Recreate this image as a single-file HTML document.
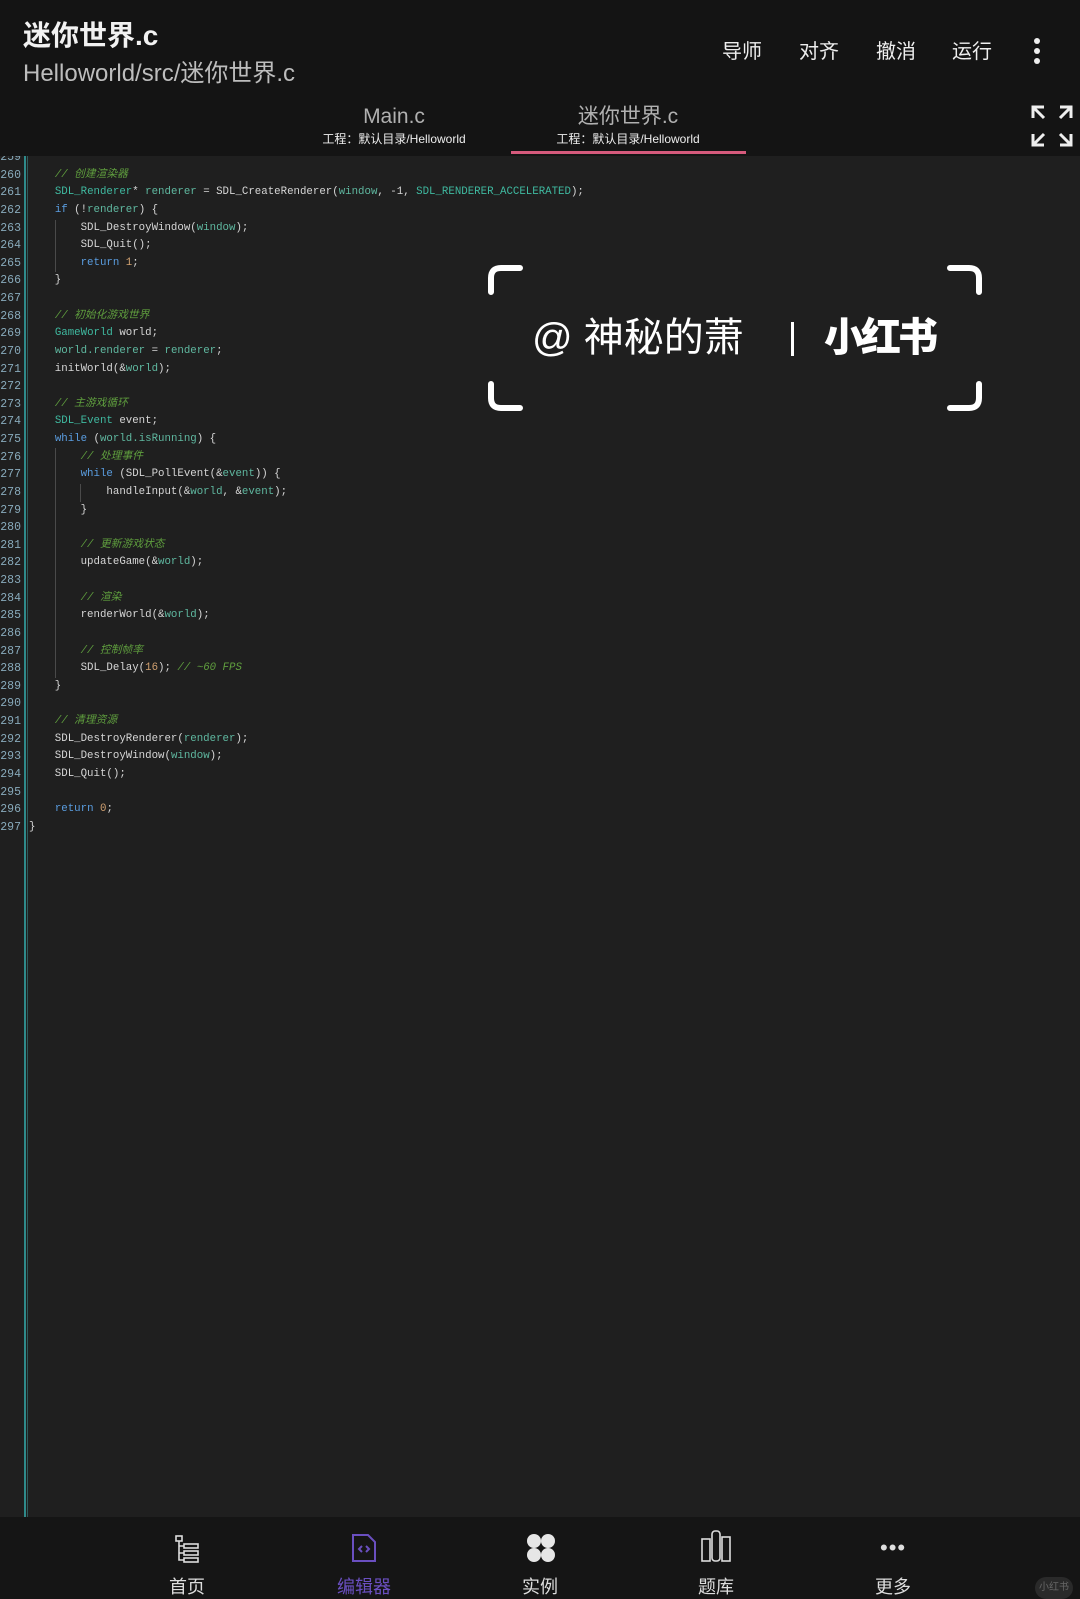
<!DOCTYPE html>
<html><head><meta charset="utf-8"><style>
*{margin:0;padding:0;box-sizing:border-box}
body{width:1080px;height:1599px;background:#1f1f1f;position:relative;overflow:hidden;font-family:"Liberation Sans","Noto Sans CJK SC",sans-serif;color:#fff}
.hdr{position:absolute;left:0;top:0;width:1080px;height:156px;background:#141414}
.t1{position:absolute;left:23px;top:14px;font-size:28px;font-weight:bold;color:#f2f2f2}
.t2{position:absolute;left:23px;top:53px;font-size:24px;color:#bdbdbd}
.m{position:absolute;top:35px;font-size:20px;color:#eee}
.tab{position:absolute;text-align:center;width:240px}
.tab .a{font-size:21px;line-height:26px;height:26px;color:#b0b0b0}
.tab .b{font-size:12px;line-height:16px;color:#eee;margin-top:1px}
.code{position:absolute;left:0;top:156px;width:1080px;height:1361px;background:#1f1f1f;overflow:hidden}
pre{position:absolute;left:29px;top:-7px;font-family:"Liberation Mono","Noto Sans CJK SC",monospace;font-size:10.75px;line-height:17.63px;color:#d6d6d6}
.ln{position:absolute;left:0;top:-7px;width:21px;text-align:right;font-family:"Liberation Mono",monospace;font-size:11.5px;line-height:17.63px;color:#8ab}
.c{color:#5f9e3e;font-style:italic}.k{color:#5a9de0}.t{color:#3fb9a0}.v{color:#5fb8a0}.n{color:#d0a070}
.g{position:absolute;width:1px;background:#4a4a4a}
.nav{position:absolute;left:0;top:1517px;width:1080px;height:82px;background:#151515}
.ni{position:absolute;top:56px;width:80px;margin-left:-40px;text-align:center;font-size:18px;color:#ddd}
.wm{position:absolute;font-size:40px;line-height:48px;color:#fff}
</style></head><body>
<div class="hdr">
<div class="t1">迷你世界.c</div>
<div class="t2">Helloworld/src/迷你世界.c</div>
<div class="m" style="left:722px">导师</div>
<div class="m" style="left:799px">对齐</div>
<div class="m" style="left:876px">撤消</div>
<div class="m" style="left:952px">运行</div>
<div style="position:absolute;left:1034px;top:38px;width:6px">
<div style="width:6px;height:6px;border-radius:3px;background:#eee;margin-bottom:4px"></div>
<div style="width:6px;height:6px;border-radius:3px;background:#eee;margin-bottom:4px"></div>
<div style="width:6px;height:6px;border-radius:3px;background:#eee"></div></div>
<div class="tab" style="left:274px;top:104px"><div class="a">Main.c</div><div class="b">工程：默认目录/Helloworld</div></div>
<div class="tab" style="left:508px;top:104px"><div class="a">迷你世界.c</div><div class="b">工程：默认目录/Helloworld</div></div>
<div style="position:absolute;left:511px;top:151px;width:235px;height:3px;background:#d65a7c"></div>
<svg style="position:absolute;left:1030px;top:104px" width="44" height="44" viewBox="0 0 44 44" fill="none" stroke="#eee" stroke-width="3"><path d="M3 14V3h11M3 3l11 11M41 14V3H30M41 3L30 14M3 30v11h11M3 41l11-11M41 30v11H30M41 41L30 30"/></svg>
</div>
<div class="code">
<div style="position:absolute;left:24px;top:0;width:2px;height:1361px;background:#2f8a8a"></div>
<div class="g" style="left:27px;top:0;height:1361px;background:#2e5a5a"></div>
<div class="ln">259<br>260<br>261<br>262<br>263<br>264<br>265<br>266<br>267<br>268<br>269<br>270<br>271<br>272<br>273<br>274<br>275<br>276<br>277<br>278<br>279<br>280<br>281<br>282<br>283<br>284<br>285<br>286<br>287<br>288<br>289<br>290<br>291<br>292<br>293<br>294<br>295<br>296<br>297</div>
<div class="g" style="left:55px;top:64px;height:52px"></div>
<div class="g" style="left:55px;top:292px;height:230px"></div>
<div class="g" style="left:80px;top:328px;height:18px"></div>
<pre>

    <span class="c">// 创建渲染器</span>
    <span class="t">SDL_Renderer</span>* <span class="v">renderer</span> = SDL_CreateRenderer(<span class="v">window</span>, -1, <span class="t">SDL_RENDERER_ACCELERATED</span>);
    <span class="k">if</span> (!<span class="v">renderer</span>) {
        SDL_DestroyWindow(<span class="v">window</span>);
        SDL_Quit();
        <span class="k">return</span> <span class="n">1</span>;
    }

    <span class="c">// 初始化游戏世界</span>
    <span class="t">GameWorld</span> world;
    <span class="v">world.renderer</span> = <span class="v">renderer</span>;
    initWorld(&amp;<span class="v">world</span>);

    <span class="c">// 主游戏循环</span>
    <span class="t">SDL_Event</span> event;
    <span class="k">while</span> (<span class="v">world.isRunning</span>) {
        <span class="c">// 处理事件</span>
        <span class="k">while</span> (SDL_PollEvent(&amp;<span class="v">event</span>)) {
            handleInput(&amp;<span class="v">world</span>, &amp;<span class="v">event</span>);
        }

        <span class="c">// 更新游戏状态</span>
        updateGame(&amp;<span class="v">world</span>);

        <span class="c">// 渲染</span>
        renderWorld(&amp;<span class="v">world</span>);

        <span class="c">// 控制帧率</span>
        SDL_Delay(<span class="n">16</span>); <span class="c">// ~60 FPS</span>
    }

    <span class="c">// 清理资源</span>
    SDL_DestroyRenderer(<span class="v">renderer</span>);
    SDL_DestroyWindow(<span class="v">window</span>);
    SDL_Quit();

    <span class="k">return</span> <span class="n">0</span>;
}</pre>
</div>
<svg style="position:absolute;left:485px;top:262px" width="500" height="152" fill="none" stroke="#fff" stroke-width="6" stroke-linecap="round"><path d="M6 30V16Q6 6 16 6H35M494 30V16Q494 6 484 6H465M6 122V136Q6 146 16 146H35M494 122V136Q494 146 484 146H465"/></svg>
<div class="wm" style="left:532px;top:314px">@ 神秘的萧</div>
<div style="position:absolute;left:791px;top:322px;width:3px;height:34px;background:#fff"></div>
<div class="wm" style="left:824px;top:314px;font-weight:900;letter-spacing:-3px">小红书</div>
<div class="nav">
<svg style="position:absolute;left:175px;top:18px" width="26" height="28" fill="none" stroke="#ddd" stroke-width="1.6"><rect x="1" y="1" width="6" height="5"/><rect x="9" y="9" width="14" height="4"/><rect x="9" y="16" width="14" height="4"/><rect x="9" y="23" width="14" height="4"/><path d="M4 6v19h5M4 11h5M4 18h5"/></svg>
<svg style="position:absolute;left:351px;top:16px" width="26" height="30" fill="none" stroke="#6a4fc0" stroke-width="2"><path d="M2 2h15l7 7v19H2z"/><path d="M11 13l-3 3 3 3M15 13l3 3-3 3"/></svg>
<svg style="position:absolute;left:526px;top:16px" width="30" height="30" fill="#e6e6e6"><ellipse cx="8" cy="8" rx="7" ry="7"/><ellipse cx="22" cy="8" rx="7" ry="7"/><ellipse cx="8" cy="22" rx="7" ry="7"/><ellipse cx="22" cy="22" rx="7" ry="7"/></svg>
<svg style="position:absolute;left:700px;top:12px" width="34" height="34" fill="none" stroke="#ddd" stroke-width="1.6"><rect x="2" y="10" width="8" height="22"/><rect x="12" y="2" width="8" height="30" rx="3"/><rect x="22" y="8" width="8" height="24"/></svg>
<div style="position:absolute;left:880px;top:18px;font-size:22px;color:#ddd;letter-spacing:1px">•••</div>
<div class="ni" style="left:187px">首页</div>
<div class="ni" style="left:364px;color:#6a4fc0">编辑器</div>
<div class="ni" style="left:540px">实例</div>
<div class="ni" style="left:716px">题库</div>
<div class="ni" style="left:893px">更多</div>
<div style="position:absolute;left:1035px;top:60px;width:38px;height:22px;border-radius:11px;background:#2a2a2a;font-size:10px;color:#666;text-align:center;line-height:22px">小红书</div>
</div>
</body></html>
